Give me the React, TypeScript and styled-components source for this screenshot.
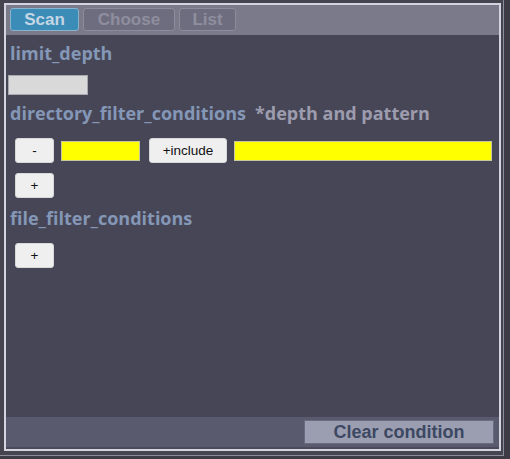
import React from "react";
import styled, { createGlobalStyle } from "styled-components";

const Global = createGlobalStyle`
  html, body { margin: 0; padding: 0; background: #3c3b46; }
  body { width: 510px; height: 459px; overflow: hidden; }
`;

const Frame = styled.div`
  box-sizing: border-box;
  width: 504px;
  height: 456px;
  padding: 3px 2px 3px 4px;
  background: #45444f;
  border-right: 1px solid #8c8c9a;
  border-bottom: 1px solid #8c8c9a;
`;

const Panel = styled.div`
  box-sizing: border-box;
  height: 448px;
  display: flex;
  flex-direction: column;
  border: 2px solid #d4d4e0;
  background: #474656;
`;

const TabBar = styled.div`
  display: flex;
  gap: 4px;
  height: 30px;
  padding: 3px 4px 0 4px;
  box-sizing: border-box;
  background: #7b7a8a;
  flex-shrink: 0;
`;

const Tab = styled.button<{ $active?: boolean; $w: number }>`
  box-sizing: border-box;
  width: ${(p) => p.$w}px;
  height: 23px;
  padding: 0;
  border-radius: 3px;
  border: 1px solid ${(p) => (p.$active ? "#8ab4cc" : "#8c8c9c")};
  background: ${(p) => (p.$active ? "#3b8cb6" : "#6e6d7f")};
  color: ${(p) => (p.$active ? "#c4d6e4" : "#8e8e9e")};
  font-family: "Liberation Sans", Arial, sans-serif;
  font-weight: 700;
  font-size: 17px;
  line-height: 21px;
`;

const Body = styled.div`
  flex: 1;
  display: flex;
  flex-direction: column;
  padding: 4px 0 0 4px;
`;

const Label = styled.div`
  font-family: "Open Sans", "Noto Sans", sans-serif;
  font-weight: 700;
  font-size: 18px;
  line-height: 28px;
  color: #8497b6;
  display: flex;
  gap: 9px;
  height: 28px;
  white-space: nowrap;
`;

const Note = styled.span`
  color: #9c9cae;
`;

const DepthInput = styled.div`
  box-sizing: border-box;
  width: 80px;
  height: 20px;
  margin: 8px 0 4px -2px;
  background: #d9d9d9;
  border: 1px solid #a8a8b0;
`;

const Row = styled.div<{ $mt: number }>`
  display: flex;
  align-items: center;
  gap: 7px;
  padding-left: 5px;
  margin-top: ${(p) => p.$mt}px;
  height: 25px;
`;

const SmallButton = styled.button<{ $w: number; $ml?: number }>`
  box-sizing: border-box;
  width: ${(p) => p.$w}px;
  height: 25px;
  margin-left: ${(p) => p.$ml ?? 0}px;
  padding: 0;
  border-radius: 3px;
  border: 1px solid #d8d8d8;
  background: #efefef;
  color: #111;
  font-family: "Liberation Sans", Arial, sans-serif;
  font-size: 13.5px;
`;

const YellowField = styled.div<{ $w: number }>`
  box-sizing: border-box;
  width: ${(p) => p.$w}px;
  height: 20px;
  background: #ffff00;
  border: 1px solid #c8c8a0;
`;

const Spacer = styled.div<{ $h: number }>`
  height: ${(p) => p.$h}px;
  flex-shrink: 0;
`;

const Footer = styled.div`
  height: 32px;
  display: flex;
  justify-content: flex-end;
  align-items: flex-start;
  padding: 3px 5px 0 0;
  box-sizing: border-box;
  background: #5a5a6e;
  border-bottom: 2px solid #4a4a5a;
  flex-shrink: 0;
`;

const ClearButton = styled.button`
  box-sizing: border-box;
  width: 190px;
  height: 24px;
  padding: 0;
  background: #9b9db1;
  border: 1px solid #6a6a80;
  color: #3d4862;
  font-family: "Liberation Sans", Arial, sans-serif;
  font-weight: 700;
  font-size: 18px;
`;

export default function App() {
  return (
    <>
      <Global />
      <Frame>
        <Panel>
          <TabBar>
            <Tab $active $w={69}>Scan</Tab>
            <Tab $w={92}>Choose</Tab>
            <Tab $w={57}>List</Tab>
          </TabBar>
          <Body>
            <Label>limit_depth</Label>
            <DepthInput />
            <Label>
              directory_filter_conditions <Note>*depth and pattern</Note>
            </Label>
            <Row $mt={11}>
              <SmallButton $w={39}>-</SmallButton>
              <YellowField $w={79} />
              <SmallButton $w={78} $ml={2}>+include</SmallButton>
              <YellowField $w={258} />
            </Row>
            <Row $mt={10}>
              <SmallButton $w={39}>+</SmallButton>
            </Row>
            <Spacer $h={6} />
            <Label>file_filter_conditions</Label>
            <Row $mt={11}>
              <SmallButton $w={39}>+</SmallButton>
            </Row>
          </Body>
          <Footer>
            <ClearButton>Clear condition</ClearButton>
          </Footer>
        </Panel>
      </Frame>
    </>
  );
}
